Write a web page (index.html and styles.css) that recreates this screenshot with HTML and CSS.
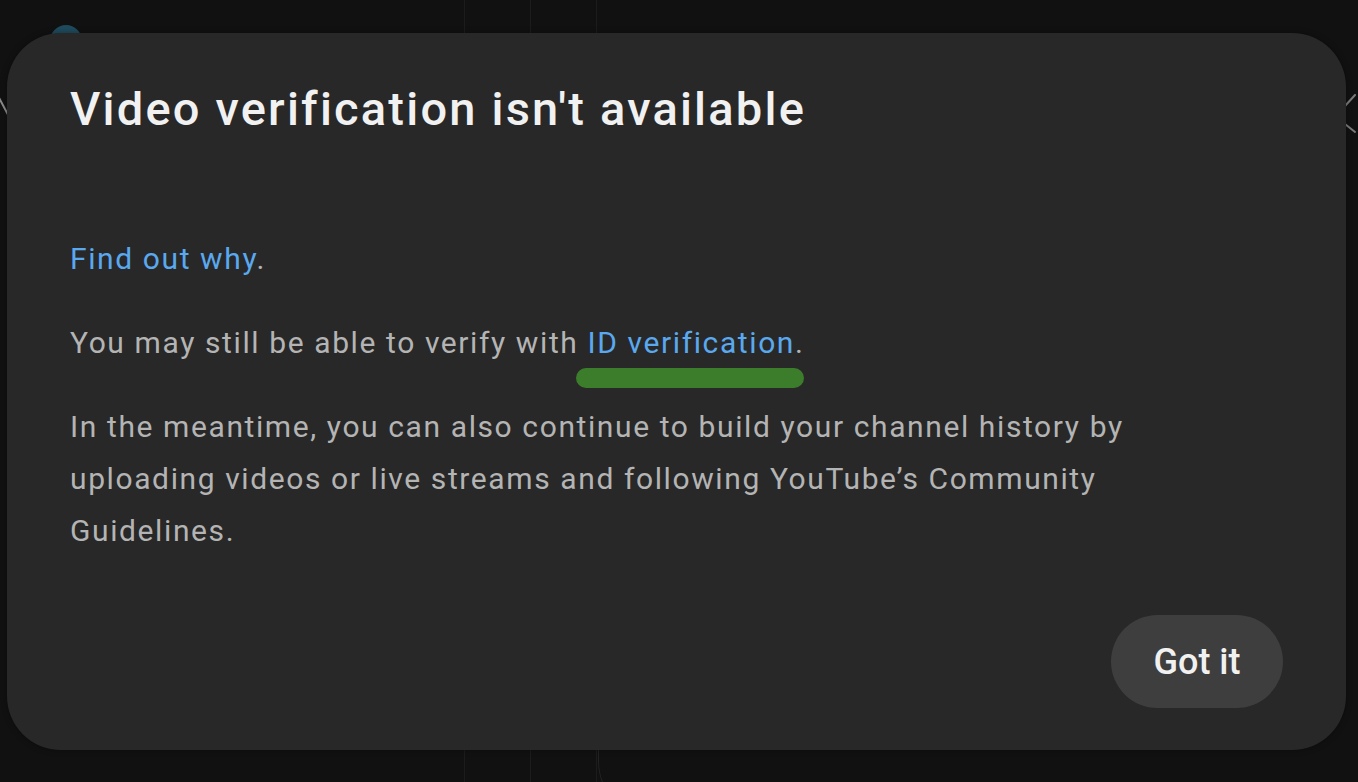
FILE: index.html
```html
<!DOCTYPE html>
<html lang="en">
<head>
<meta charset="utf-8">
<title>Video verification isn't available</title>
<link rel="stylesheet" href="styles.css">
</head>
<body>
<div class="backdrop" aria-hidden="true">
  <span class="bg-line bg-line-a"></span>
  <span class="bg-line bg-line-b"></span>
  <span class="bg-line bg-line-c"></span>
  <span class="bg-avatar"></span>
  <span class="bg-stroke-left"></span>
  <svg class="bg-chevron" width="14" height="44" viewBox="0 0 14 44"><path d="M2 12 L12 1 M2 30 L12 38" stroke="#7a7a7a" stroke-width="2" fill="none" stroke-linecap="round"/></svg>
  <span class="bg-arc"></span>
</div>
<div class="dialog" role="dialog">
  <h1 class="title">Video verification isn't available</h1>
  <div class="content">
    <p class="para"><a class="link" href="#">Find out why</a>.</p>
    <p class="para">You may still be able to verify with <a class="link link-marked" href="#">ID verification<span class="marker"></span></a>.</p>
    <p class="para">In the meantime, you can also continue to build your channel history by uploading videos or live streams and following YouTube’s Community Guidelines.</p>
  </div>
  <div class="actions">
    <button class="btn" type="button">Got it</button>
  </div>
</div>
</body>
</html>
```
FILE: styles.css
```css
html, body {
  margin: 0;
  padding: 0;
  height: 100%;
}
body {
  background: #111111;
  font-family: Roboto, "Noto Sans", "Liberation Sans", sans-serif;
  position: relative;
  overflow: hidden;
  display: flex;
  flex-direction: column;
}
.backdrop {
  position: absolute;
  inset: 0;
  z-index: 0;
}
.bg-line {
  position: absolute;
  width: 1px;
  top: 0;
  bottom: 0;
  background: #1c1c1c;
}
.bg-line-a { left: 464px; }
.bg-line-b { left: 530px; }
.bg-line-c { left: 596px; }
.bg-avatar {
  position: absolute;
  left: 50px;
  top: 25px;
  width: 32px;
  height: 32px;
  border-radius: 50%;
  background: #1f4b5e;
}
.bg-stroke-left {
  position: absolute;
  left: -2px;
  top: 98px;
  width: 2px;
  height: 28px;
  background: #8a8a8a;
  transform: rotate(-28deg);
  transform-origin: top left;
}
.bg-chevron {
  position: absolute;
  left: 1343px;
  top: 94px;
}
.bg-arc {
  position: absolute;
  left: 598px;
  top: 730px;
  width: 120px;
  height: 90px;
  border-left: 1px solid #222;
  border-bottom: 1px solid #222;
  border-radius: 0 0 0 60px;
}
.dialog {
  position: relative;
  z-index: 1;
  margin: 33px 12px 0 7px;
  height: 717px;
  box-sizing: border-box;
  background: #282828;
  border-radius: 54px;
  padding: 48px 63px 42px 63px;
  display: flex;
  flex-direction: column;
  box-shadow: 0 0 6px rgba(0, 0, 0, 0.35);
}
.title {
  margin: 0;
  font-size: 47px;
  line-height: 56px;
  font-weight: 500;
  color: #f1f1f1;
  letter-spacing: 2.2px;
}
.content {
  margin-top: 96px;
  max-width: 1150px;
  display: flex;
  flex-direction: column;
  gap: 32px;
}
.para {
  margin: 0;
  font-size: 30px;
  line-height: 52px;
  color: #b4b4b4;
  font-weight: 400;
  letter-spacing: 1.6px;
}
.link {
  color: #5aa9ef;
  text-decoration: none;
}
.link-marked {
  position: relative;
}
.marker {
  position: absolute;
  left: -12px;
  right: -9px;
  top: calc(100% + 8px);
  height: 20px;
  border-radius: 10px;
  background: #3c7d2c;
}
.actions {
  margin-top: auto;
  display: flex;
  justify-content: flex-end;
}
.btn {
  width: 172px;
  height: 93px;
  border: none;
  border-radius: 47px;
  background: #3e3e3e;
  color: #f1f1f1;
  font-family: Roboto, "Noto Sans", "Liberation Sans", sans-serif;
  font-size: 36px;
  font-weight: 500;
  padding: 0;
  cursor: pointer;
}
```
